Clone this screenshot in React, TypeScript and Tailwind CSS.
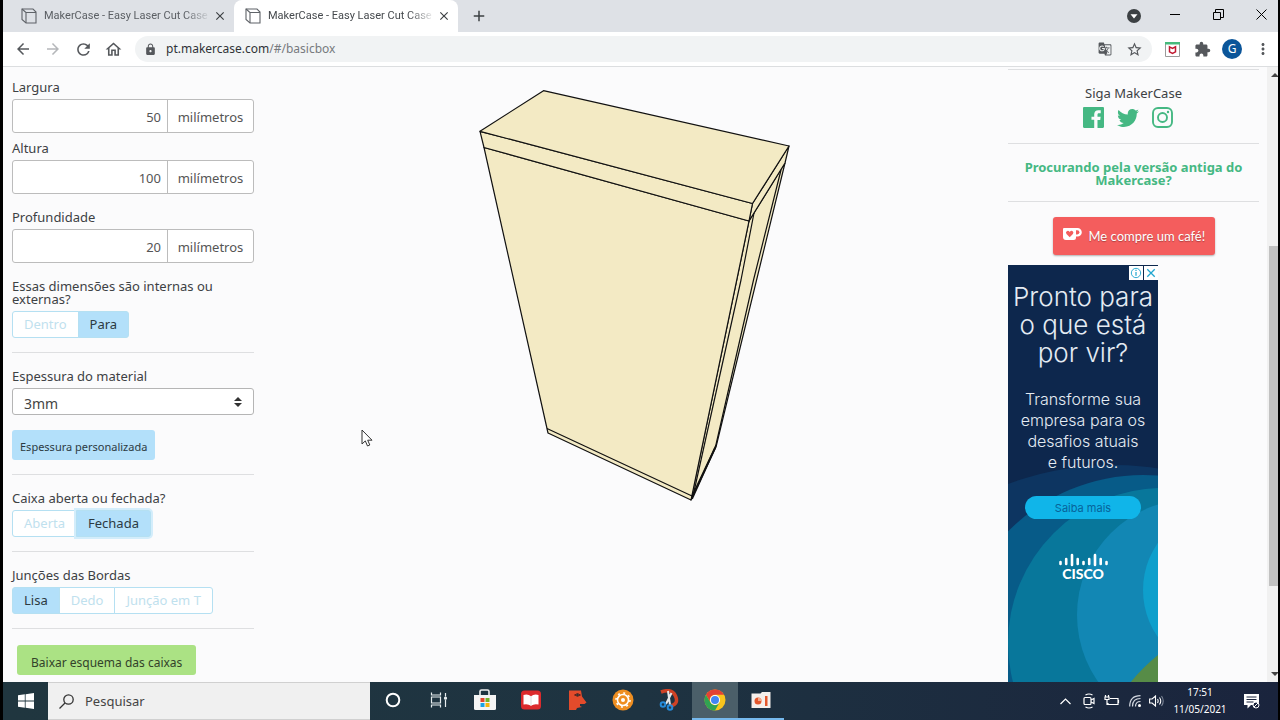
import React from 'react';
import { FaTwitter } from 'react-icons/fa';
import {
  MdArrowBack, MdArrowForward, MdRefresh, MdOutlineHome, MdLock, MdGTranslate,
  MdStarBorder, MdExtension, MdMoreVert, MdAdd, MdClose,
} from 'react-icons/md';

function CubeIcon() {
  return (
    <svg className="size-4 shrink-0" viewBox="0 0 16 16" fill="none" stroke="#5f6368" strokeWidth="1.1" aria-hidden="true">
      <path d="M1 1h11l3 3v11H5l-4-3.500z" />
      <path d="M1 1l4 3.500V15M5 4.500h10" />
    </svg>
  );
}

function Tab({ active = false }: { active?: boolean }) {
  return (
    <div className={active
      ? 'flex w-56 items-center rounded-t-lg bg-white pl-[11px] text-[#45494d]'
      : 'flex w-[231px] items-center pl-[18px] text-[#5a5e63]'}>
      <CubeIcon />
      <span className="ml-[7px] w-[167px] shrink-0 whitespace-nowrap font-['Roboto',sans-serif] text-[11px] [mask-image:linear-gradient(to_right,black_84%,transparent)]">
        MakerCase - Easy Laser Cut Case
      </span>
      <button aria-label="Fechar guia" className="ml-[2px] text-[#3c4043]"><MdClose size={14} /></button>
    </div>
  );
}

function BrowserTop() {
  return (
    <header>
      <div className="flex h-8 bg-[#dee1e6]">
        <Tab />
        <Tab active />
        <button aria-label="Nova guia" className="ml-3 text-[#3c4043]"><MdAdd size={18} /></button>
        <div className="ml-auto flex items-center pr-[11px] text-black">
          <svg className="mr-[29px] size-[14px]" viewBox="0 0 14 14" aria-hidden="true">
            <circle cx="7" cy="7" r="7" fill="#3c4043" /><path d="M3.500 5.200h7L7 9.500z" fill="#fff" />
          </svg>
          <button aria-label="Minimizar" className="mr-[33px] pb-1"><svg className="h-3 w-[10px]" viewBox="0 0 10 12" stroke="currentColor"><path d="M0 6.500h10" /></svg></button>
          <button aria-label="Restaurar" className="mr-[32px] pb-1"><svg className="size-[11px]" viewBox="0 0 11 11" fill="none" stroke="currentColor"><path d="M.500 3.500h7v7h-7zM2.500 3.500v-3h8v8h-3" /></svg></button>
          <button aria-label="Fechar" className="pb-1"><svg className="size-[11px]" viewBox="0 0 11 11" fill="none" stroke="currentColor"><path d="M.500.500l10 10M10.500.500l-10 10" /></svg></button>
        </div>
      </div>
      <div className="flex h-[35px] items-center border-b border-[#dcdee0] bg-white pl-[11px] pr-[6px] text-[#55585c]">
        <button aria-label="Voltar"><MdArrowBack size={18} /></button>
        <button aria-label="Avançar" className="ml-3 text-[#b5b7ba]"><MdArrowForward size={18} /></button>
        <button aria-label="Recarregar" className="ml-3"><MdRefresh size={19} /></button>
        <button aria-label="Página inicial" className="ml-[11px]"><MdOutlineHome size={19} /></button>
        <div className="ml-3 flex h-[26px] flex-1 items-center rounded-full bg-[#f1f3f4] pl-[9px] pr-[9px]">
          <MdLock size={13} />
          <span className="ml-[9px] flex-1 text-xs text-[#303337]">pt.makercase.com<span className="text-[#777a7e]">/#/basicbox</span></span>
          <button aria-label="Traduzir"><MdGTranslate size={14} /></button>
          <button aria-label="Favoritos" className="ml-[14px]"><MdStarBorder size={17} /></button>
        </div>
        <svg className="ml-[13px] size-[15px]" viewBox="0 0 15 15" aria-hidden="true">
          <path d="M.500.500h14v14H.500z" fill="#fff" stroke="#9a9a9a" /><path d="M0 0h15v2.500H0z" fill="#46ba7c" />
          <path d="M4.500 4.800L7.500 6.300l3-1.500v5L7.500 11.300l-3-1.500z" fill="none" stroke="#c01830" strokeWidth="1.500" />
        </svg>
        <button aria-label="Extensões" className="ml-[14px]"><MdExtension size={17} /></button>
        <button aria-label="Perfil" className="ml-[11px] flex size-5 items-center justify-center rounded-full bg-[#0b5599] text-xs text-white">G</button>
        <button aria-label="Menu" className="ml-[12px]"><MdMoreVert size={18} /></button>
      </div>
    </header>
  );
}

const rule = 'border-t border-[#dedfe1]';

function Dimension({ id, label, value, className }: { id: string; label: string; value: string; className: string }) {
  return (
    <div className={className}>
      <label htmlFor={id} className="mb-1 block h-4 leading-4">{label}</label>
      <div className="flex h-[34px] overflow-hidden rounded-[3px] border border-[#bcbcbc] bg-white text-[#555]">
        <input id={id} defaultValue={value} className="min-w-0 flex-1 px-[6px] pt-1 text-right outline-none" />
        <span className="flex w-[86px] items-center justify-center border-l border-[#bcbcbc] pt-1">milímetros</span>
      </div>
    </div>
  );
}

function Choice({ options, selected, glow = false }: { options: string[]; selected: string; glow?: boolean }) {
  return (
    <div className="flex h-[27px]">
      {options.map((o) => (
        <button
          key={o}
          aria-pressed={o === selected}
          className={
            'border border-[#b5e0f2] px-[11px] first:rounded-l-[3px] last:rounded-r-[3px] not-first:-ml-px ' +
            (o === selected ? 'bg-[#b3e0fa] text-[#2c3a42] ' + (glow ? 'ring-2 ring-[#d3edfb]' : '') : 'bg-white text-[#bfe1ee]')
          }
        >
          {o}
        </button>
      ))}
    </div>
  );
}

function Sidebar() {
  return (
    <aside className="ml-[9px] w-[242px] shrink-0 pt-3 text-[13px] text-[#3d4144]">
      <Dimension id="largura" label="Largura" value="50" className="" />
      <Dimension id="altura" label="Altura" value="100" className="mt-[7px]" />
      <Dimension id="profundidade" label="Profundidade" value="20" className="mt-[15px]" />
      <p className="mt-[17px] mb-[5px] leading-[13px]">Essas dimensões são internas ou externas?</p>
      <Choice options={['Dentro', 'Para']} selected="Para" />
      <hr className={'mt-[14px] ' + rule} />
      <label htmlFor="espessura" className="mt-[15px] mb-1 block h-4 leading-4">Espessura do material</label>
      <div className="relative">
        <select id="espessura" className="block h-[27px] w-full appearance-none rounded-[3px] border border-[#b5b5b5] bg-white pt-1 pl-[11px] text-sm text-[#444]">
          <option>3mm</option>
        </select>
        <svg className="pointer-events-none absolute top-[9px] right-3 h-[10px] w-2" viewBox="0 0 8 10" fill="#333" aria-hidden="true"><path d="M4 0l4 4H0zM4 10L0 6h8z" /></svg>
      </div>
      <button className="mt-[15px] block h-[30px] rounded-[3px] bg-[#b3e0fa] px-2 pt-1 text-[11px] text-[#2c3a42]">Espessura personalizada</button>
      <hr className={'mt-[14px] ' + rule} />
      <p className="mt-[15px] mb-1 h-4 leading-4">Caixa aberta ou fechada?</p>
      <Choice options={['Aberta', 'Fechada']} selected="Fechada" glow />
      <hr className={'mt-[14px] ' + rule} />
      <p className="mt-[15px] mb-1 h-4 leading-4">Junções das Bordas</p>
      <Choice options={['Lisa', 'Dedo', 'Junção em T']} selected="Lisa" />
      <hr className={'mt-[14px] ' + rule} />
      <button className="mt-4 ml-[5px] block h-[30px] rounded-[3px] bg-[#abe284] px-[14px] pt-[6px] text-xs text-[#33422a]">Baixar esquema das caixas</button>
    </aside>
  );
}

function BoxPreview() {
  return (
    <main className="relative flex min-w-0 flex-1 justify-center pt-5 pl-[6px]">
      <svg className="h-[418px] w-[316px]" viewBox="476 87 316 418" fill="#f3eac4" stroke="#111" strokeWidth="1.200" strokeLinejoin="round" role="img" aria-label="Caixa">
        <path d="M749 221L785 163L716 447L691 500z" />
        <path d="M484 147.500L548 433L691 500L749 221z" />
        <path d="M547 428.500L692 496L716 445" fill="none" />
        <path d="M754 213L741 280L693 496M781 170L753.500 280L715 449" fill="none" />
        <path d="M692 499L715 448" strokeWidth="1.800" />
        <path d="M752.500 203.500L789 146L785 163L749 221z" />
        <path d="M480 131.300L752.500 203.500L749 221L484 147.500z" />
        <path d="M543.500 90.700L789 146L752.500 203.500L480 131.300z" />
      </svg>
      <svg className="absolute top-[362px] left-[107px] h-[19px] w-3" viewBox="0 0 12 19" fill="#fff" stroke="#333" aria-hidden="true">
        <path d="M1 1v14l3.300-3.100L6.500 17l2.300-1-2.100-4.800H11z" />
      </svg>
    </main>
  );
}

function Ad() {
  return (
    <div className="relative min-h-0 w-[150px] flex-1 overflow-hidden bg-[#0d274d] text-center font-['Inter',sans-serif] font-light text-[#e4ebf3]">
      <svg className="absolute inset-0 h-[418px] w-[150px]" viewBox="0 0 150 418" aria-hidden="true">
        <circle cx="105" cy="500" r="300" fill="#0d3561" />
        <circle cx="135" cy="400" r="190" fill="#075b88" />
        <circle cx="155" cy="378" r="155" fill="#08779b" />
        <circle cx="185" cy="350" r="116" fill="#1287b4" />
        <circle cx="217" cy="325" r="82" fill="#0e9fcc" />
        <path d="M122 418Q134 403 150 390V418z" fill="#578c47" />
      </svg>
      <div className="absolute top-0 right-0 flex gap-px pt-px">
        <svg className="size-[14px] bg-white" viewBox="0 0 15 15" fill="none" stroke="#22a7d0" aria-hidden="true"><circle cx="7.500" cy="7.500" r="5" /><path d="M7.500 6.500v4M7.500 4v1.300" strokeWidth="1.300" /></svg>
        <svg className="size-[14px] bg-white" viewBox="0 0 15 15" fill="none" stroke="#22a7d0" strokeWidth="1.400" aria-hidden="true"><path d="M3.500 3.500l8 8M11.500 3.500l-8 8" /></svg>
      </div>
      <div className="relative">
        <h2 className="pt-[18px] text-[26px] leading-7">Pronto para<br />o que está<br />por vir?</h2>
        <p className="mt-[22px] text-base leading-[21px]">Transforme sua<br />empresa para os<br />desafios atuais<br />e futuros.</p>
        <a href="#saiba" className="mx-auto mt-[23px] block h-[23px] w-[116px] rounded-full bg-[#10b5e9] text-[11px] leading-6 font-normal text-[#07639a]">Saiba mais</a>
        <svg className="mx-auto mt-[34px] h-[14px] w-[49px]" viewBox="0 0 49 14" stroke="#fff" strokeWidth="2.600" strokeLinecap="round" aria-label="Cisco">
          <path d="M1.500 9v2M7.200 6v5M13 2v10M18.700 6v5M24.500 9v2M30.200 6v5M36 2v10M41.700 6v5M47.500 9v2" />
        </svg>
        <p className="font-['Lato',sans-serif] text-sm leading-[14px] font-black text-white">CISCO</p>
      </div>
    </div>
  );
}

function RightColumn() {
  return (
    <aside className="mr-2 flex w-[251px] shrink-0 flex-col pt-[2px] text-[13px] text-[#3d4144]">
      <hr className={rule} />
      <p className="mt-[15px] h-4 text-center leading-4">Siga MakerCase</p>
      <div className="mt-[6px] flex justify-center gap-[13px] pr-3 text-[#45b883]">
        <a href="#facebook" aria-label="Facebook">
          <svg className="size-[21px]" viewBox="0 0 24 24" fill="currentColor"><path d="M22.676 0H1.324C.593 0 0 .593 0 1.324v21.352C0 23.408.593 24 1.324 24h11.494v-9.294H9.689v-3.621h3.129V8.410c0-3.099 1.894-4.785 4.659-4.785 1.325 0 2.464.097 2.796.141v3.240h-1.921c-1.500 0-1.792.721-1.792 1.771v2.311h3.584l-.465 3.630H16.560V24h6.115c.733 0 1.325-.592 1.325-1.324V1.324C24 .593 23.408 0 22.676 0" /></svg>
        </a>
        <a href="#twitter" aria-label="Twitter"><FaTwitter size={22} /></a>
        <a href="#instagram" aria-label="Instagram">
          <svg className="size-[21px]" viewBox="0 0 21 21" fill="none" stroke="currentColor" strokeWidth="1.900"><rect x="1" y="1" width="19" height="19" rx="5" /><circle cx="10.500" cy="10.500" r="4.500" /><circle cx="16" cy="5" r="1.200" fill="currentColor" stroke="none" /></svg>
        </a>
      </div>
      <hr className={'mt-[14px] ' + rule} />
      <a href="#antiga" className="mt-[17px] px-3 text-center leading-[13px] font-bold text-[#45b883]">Procurando pela versão antiga do Makercase?</a>
      <hr className={'mt-[14px] ' + rule} />
      <a href="#cafe" className="mx-auto mt-[15px] mb-[10px] flex h-[38px] w-[162px] items-center rounded-[3px] bg-[#f45d5d] pl-[10px] font-['Lato',sans-serif] text-[13px] whitespace-nowrap text-white shadow-[0_1px_2px_rgba(0,0,0,0.3)]">
        <svg className="mb-1 h-3 w-[19px]" viewBox="0 0 19 12" aria-hidden="true"><path d="M1 0h13.500a4.300 4.300 0 010 8.600H13V9.500Q13 12 10.500 12H3Q0 12 0 9V1q0-1 1-1z" fill="#fff" /><path d="M13 2.200h1.300a2.100 2.100 0 010 4.200H13z" fill="#f45d5d" /><path d="M6.700 9.200L3.500 6Q2.300 4.300 3.700 3.200 5.300 2.200 6.700 3.900 8.200 2.200 9.700 3.200 11.100 4.300 9.900 6z" fill="#f45d5d" /></svg>
        <span className="ml-[7px] pt-[2px] [text-shadow:0_1px_1px_rgba(0,0,0,0.3)]">Me compre um café!</span>
      </a>
      <Ad />
    </aside>
  );
}

function ScrollTrack() {
  return (
    <div className="flex w-[11px] shrink-0 flex-col items-end overflow-hidden bg-[#f1f1f1]" aria-hidden="true">
      <svg className="mt-[6px] h-1 w-[7px]" viewBox="0 0 7 4" fill="#444"><path d="M0 4l4-4 4 4z" /></svg>
      <div className="grow-[169]" />
      <div className="w-[9px] grow-[340] bg-[#c1c1c1]" />
      <div className="grow-[86]" />
      <svg className="mb-[6px] h-1 w-[7px]" viewBox="0 0 7 4" fill="#444"><path d="M0 0h8L4 4z" /></svg>
    </div>
  );
}

const apps: { name: string; open?: boolean; focused?: boolean; art: React.ReactNode }[] = [
  { name: 'Cortana', art: <circle cx="11" cy="11" r="6.300" fill="none" stroke="#fff" strokeWidth="2" /> },
  { name: 'Visão de tarefas', art: <g fill="none" stroke="#e8eef0" strokeWidth="1.200"><path d="M3.500 3.500V6h9V3.500M3.500 8h9v6h-9zM3.500 18.500V16h9v2.500M17.500 4v3.500M17.500 11v7" /><circle cx="17.500" cy="9.200" r="1" fill="#e8eef0" /></g> },
  { name: 'Microsoft Store', art: <g><path d="M6 6V2.500Q6 1 7.500 1h6Q15 1 15 2.500V6" fill="none" stroke="#eee" strokeWidth="1.600" /><path d="M0 6h22v13.500Q22 21 20.500 21h-19Q0 21 0 19.500z" fill="#f4f4f4" /><path d="M6.500 9h4v4h-4z" fill="#e2452b" /><path d="M11.500 9h4v4h-4z" fill="#74b32a" /><path d="M6.500 14h4v4h-4z" fill="#1ba2e5" /><path d="M11.500 14h4v4h-4z" fill="#f7b50c" /></g> },
  { name: 'Leitor', art: <g><rect x="1" y="1.500" width="20" height="19" rx="3.500" fill="#dc2b2d" /><path d="M3.500 6Q8 4.800 11 7.200 14 4.800 18.500 6v9.500Q14 14.500 11 16.800 8 14.500 3.500 15.500z" fill="#fff" /><path d="M11 7v9.500" stroke="#ddd" /></g> },
  { name: 'Perfil', art: <g><path d="M3 1.500h12l1 6 4.500 6-2 1.500H14v2l2 1-5 1-1 2H3z" fill="#e34b2b" /><path d="M8.500 6q3-3 6 0-3 2.500-6 0z" fill="none" stroke="#5b241f" /><circle cx="11.500" cy="6" r="1.200" fill="#333" /></g> },
  { name: 'Ajustes', art: <g><circle cx="11" cy="11" r="10.500" fill="#ee8e21" /><circle cx="11" cy="11" r="5.500" fill="none" stroke="#fff" strokeWidth="1.600" /><circle cx="11" cy="11" r="7" fill="none" stroke="#fff" strokeWidth="1.600" strokeDasharray="2 3.500" /><circle cx="11" cy="11" r="2" fill="#fff" /></g> },
  { name: 'Recorte', art: <g fill="none"><path d="M3 3Q14-1 17.500 7t-5 10" stroke="#cf4225" strokeWidth="3.500" /><path d="M10 2l2 14M13.500 4L8 15" stroke="#e4e7e9" strokeWidth="2" /><circle cx="5" cy="15.500" r="2.300" stroke="#268bd9" strokeWidth="2" /><circle cx="12" cy="18.500" r="2.300" stroke="#268bd9" strokeWidth="2" /></g> },
  { name: 'Chrome', open: true, focused: true, art: <g><circle cx="11" cy="11" r="10.500" fill="#f9c51d" /><path d="M1.900 5.750A10.500 10.500 0 0120.100 5.750H11A5.250 5.250 0 006.450 13.600z" fill="#e34234" /><path d="M1.900 5.750L6.450 13.600A5.250 5.250 0 0015.550 13.600L11 21.500A10.500 10.500 0 011.900 5.750z" fill="#31a352" /><circle cx="11" cy="11" r="5" fill="#fff" /><circle cx="11" cy="11" r="4" fill="#4285f4" /></g> },
  { name: 'Gravador', open: true, art: <g><path d="M1.500 4.500h9L12 3h8.500v16h-19z" fill="#f5efeb" /><circle cx="8" cy="12" r="3.500" fill="#e4572c" /><path d="M8 12V8.500a3.500 3.500 0 013.500 3.500z" fill="#f4aa8b" /><path d="M15 7h2.500v10H15z" fill="#e4572c" /></g> },
];

function Taskbar() {
  return (
    <footer className="flex h-[38px] shrink-0 bg-linear-to-r from-[#20363f] via-[#1e3341] to-[#1a243d] text-white">
      <button aria-label="Iniciar" className="flex w-[45px] items-center justify-center">
        <svg className="size-4" viewBox="0 0 16 16" fill="#fff"><path d="M0 2.300l6.800-1V7.600H0zM7.600 1.200L16 0v7.600H7.600zM0 8.400h6.800v6.300L0 13.700zM7.600 8.400H16V16l-8.400-1.200z" /></svg>
      </button>
      <label className="flex w-[322px] items-center border-y border-[#d0d0d0] bg-[#f0f0f0] pl-[11px]">
        <svg className="size-[15px]" viewBox="0 0 15 15" fill="none" stroke="#333" strokeWidth="1.300"><circle cx="9.500" cy="5.500" r="4.700" /><path d="M6 9L.500 14.500" /></svg>
        <input aria-label="Pesquisar" placeholder="Pesquisar" className="ml-[11px] min-w-0 flex-1 bg-transparent pt-[2px] text-[13px] outline-none placeholder:text-[#444]" />
      </label>
      <nav className="flex">
        {apps.map((a) => (
          <button key={a.name} aria-label={a.name} className={'flex w-[46px] items-center justify-center border-b-2 ' + (a.focused ? 'border-[#76b9ed] bg-[#4b5f69]' : a.open ? 'border-[#76b9ed]' : 'border-transparent')}>
            <svg className="size-[22px]" viewBox="0 0 22 22">{a.art}</svg>
          </button>
        ))}
      </nav>
      <div className="ml-auto flex items-center pr-[18px]">
        <svg className="h-[7px] w-[11px]" viewBox="0 0 11 7" fill="none" stroke="#fff" strokeWidth="1.200"><path d="M.500 6l5-5 5 5" /></svg>
        <svg className="ml-3 h-4 w-[13px]" viewBox="0 0 13 16" fill="none" stroke="#fff" strokeWidth="1.200"><rect x="1" y="4.500" width="7" height="7" rx="1" /><path d="M8 7l3-1.500v5L8 9M2.500 2q3.500-2 7 0M2.500 14q3.500 2 7 0" /></svg>
        <svg className="ml-[8px] h-3 w-4" viewBox="0 0 16 12" fill="none" stroke="#fff" strokeWidth="1.200"><path d="M6 3.500h8v6H4V8M14.500 5v3M1.500 0v2M4.500 0v2M1 2h4v2.500H1zM3 5v5" /></svg>
        <svg className="ml-[9px] size-3" viewBox="0 0 12 12" fill="none" stroke="#d5dae2" strokeWidth="1.200"><path d="M.700 11.500Q.700.700 11.500.700M3.500 11.500q0-8 8-8M6.500 11.500q0-5 5-5" /><circle cx="10.500" cy="10.500" r="1.500" fill="#fff" stroke="none" /></svg>
        <svg className="ml-2 h-3 w-[15px]" viewBox="0 0 15 12" fill="none" stroke="#fff" strokeWidth="1.100"><path d="M.600 4h2.500L6.500 1v10L3.100 8H.600zM8.500 4q1.300 2 0 4M10.500 2.500q2.500 3.500 0 7" /><path d="M12.500 1q3.500 5 0 10" stroke="#7c8596" /></svg>
        <div className="ml-[9px] w-[54px] text-center text-[10px] leading-[17px] whitespace-nowrap">17:51<br />11/05/2021</div>
        <svg className="ml-[17px] h-[15px] w-4" viewBox="0 0 16 15" aria-hidden="true"><path d="M0 0h15v11H7l-3.500 3.500V11H0z" fill="#fff" /><path d="M2.500 3h10M2.500 5.500h10M2.500 8h7" stroke="#1a243d" /><circle cx="12" cy="11" r="3" fill="#1a243d" stroke="#fff" /><path d="M10 13l4-4" stroke="#fff" /></svg>
      </div>
    </footer>
  );
}

export default function App() {
  return (
    <div className="flex h-screen flex-col overflow-hidden border-r-2 border-l-[3px] border-black bg-[#fbfbfc] font-['Noto_Sans','Open_Sans',sans-serif]">
      <BrowserTop />
      <div className="flex min-h-0 flex-1 overflow-hidden">
        <Sidebar />
        <BoxPreview />
        <RightColumn />
        <ScrollTrack />
      </div>
      <Taskbar />
    </div>
  );
}
